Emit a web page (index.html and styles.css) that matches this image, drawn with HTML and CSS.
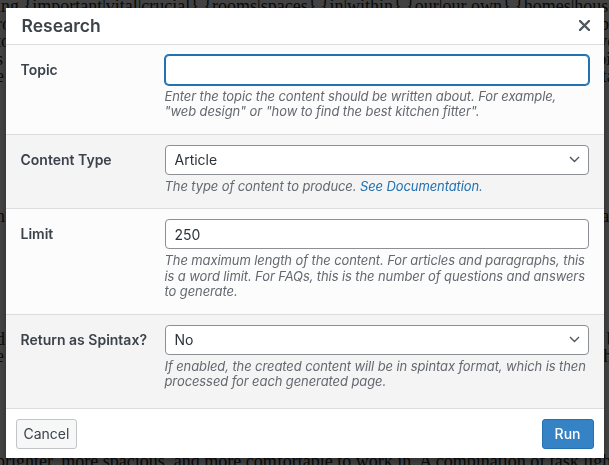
FILE: index.html
```html
<!DOCTYPE html>
<html lang="en">
<head>
  <meta charset="UTF-8" />
  <title>Research</title>
  <link rel="stylesheet" href="styles.css">
</head>
<body>

<div class="page">
  <div class="line">ing {important|vital|crucial} {rooms|spaces} {in|within} {our|our own} {homes|houses}. {It's|It is} {the|a} place</div>
  <div class="line">rooms where we cook, eat and spend time together, so it's worth the effort to think about how</div>
  <div class="line">to the layout, the storage and the surfaces, and also about the fitter who will do the work for</div>
  <div class="line">s who know the trade, the materials and the right questions to ask before a single cabinet here</div>
  <div class="line">e finished room will be the result of good planning and careful work from the very start in the</div>
  <div class="line"></div>
  <div class="line"></div>
  <div class="line"></div>
  <div class="line"></div>
  <div class="line"></div>
  <div class="line"></div>
  <div class="line"></div>
  <div class="line">n a kitchen that is planned around the way you live, every cupboard and drawer has a reason</div>
  <div class="line"></div>
  <div class="line"></div>
  <div class="line"></div>
  <div class="line"></div>
  <div class="line"></div>
  <div class="line"></div>
  <div class="line">d the right lighting can change the whole feel of the room, making it warmer and far brighter</div>
  <div class="line">e and more welcoming for family and friends who come to visit in the evening, or who gather</div>
  <div class="line"></div>
  <div class="line"></div>
  <div class="line"></div>
  <div class="line"></div>
  <div class="line"></div>
  <div class="line">brighter, more spacious, and more comfortable to work in. A combination of task lighting and</div>
</div>

<div class="overlay">
  <div class="modal">
    <div class="modal-header">
      <h1>Research</h1>
      <button class="close" aria-label="Close">
        <svg width="11" height="11" viewBox="0 0 11 11">
          <path d="M1 1 L10 10 M10 1 L1 10" stroke="#50575e" stroke-width="2.4" stroke-linecap="round"/>
        </svg>
      </button>
    </div>

    <div class="modal-body">
      <div class="row">
        <div class="label">Topic</div>
        <div class="field">
          <input class="input focus" type="text" value="">
          <p class="desc">Enter the topic the content should be written about. For example, "web design" or "how to find the best kitchen fitter".</p>
        </div>
      </div>

      <div class="row alt">
        <div class="label">Content Type</div>
        <div class="field">
          <div class="select">
            <span>Article</span>
            <svg width="11" height="7" viewBox="0 0 11 7"><polyline points="1,1 5.5,5.5 10,1" fill="none" stroke="#50575e" stroke-width="1.4"/></svg>
          </div>
          <p class="desc">The type of content to produce. <a href="#">See Documentation.</a></p>
        </div>
      </div>

      <div class="row">
        <div class="label">Limit</div>
        <div class="field">
          <input class="input" type="text" value="250">
          <p class="desc">The maximum length of the content. For articles and paragraphs, this is a word limit. For FAQs, this is the number of questions and answers to generate.</p>
        </div>
      </div>

      <div class="row alt last">
        <div class="label">Return as Spintax?</div>
        <div class="field">
          <div class="select">
            <span>No</span>
            <svg width="11" height="7" viewBox="0 0 11 7"><polyline points="1,1 5.5,5.5 10,1" fill="none" stroke="#50575e" stroke-width="1.4"/></svg>
          </div>
          <p class="desc">If enabled, the created content will be in spintax format, which is then processed for each generated page.</p>
        </div>
      </div>
    </div>

    <div class="modal-footer">
      <button class="btn">Cancel</button>
      <button class="btn primary">Run</button>
    </div>
  </div>
</div>

</body>
</html>
```

FILE: styles.css
```css
* {
  box-sizing: border-box;
  margin: 0;
  padding: 0;
}
body {
  background-color: #fff;
  overflow: hidden;
  height: 465px;
}
.page {
  margin-top: -2px;
  width: 609px;
  overflow: hidden;
  font-family: "Liberation Serif", serif;
  font-size: 18px;
  color: #2a2a2a;
}
.page .line {
  height: 17.5px;
  line-height: 17.5px;
  margin-left: -4px;
  white-space: nowrap;
  overflow: hidden;
}
.overlay {
  position: fixed;
  top: 0;
  left: 0;
  right: 0;
  bottom: 0;
  background-color: rgba(0,0,0,0.74);
  display: flex;
  align-items: center;
  justify-content: center;
}
.modal {
  width: 598px;
  background-color: #fff;
  font-family: Inter, "Liberation Sans", sans-serif;
  color: #3c434a;
  box-shadow: 0 3px 6px rgba(0,0,0,0.3);
}
.modal-header {
  height: 37px;
  border-bottom: 1px solid #dcdcde;
  display: flex;
  align-items: center;
  justify-content: space-between;
  padding: 0 14px 0 16px;
}
.modal-header h1 {
  font-size: 17.5px;
  font-weight: 600;
  color: #3c434a;
  line-height: 36px;
}
.close {
  background: none;
  border: none;
  width: 11px;
  height: 11px;
  display: flex;
  cursor: pointer;
}
.row {
  display: flex;
  padding: 10px 15px 14px;
  background-color: #fcfcfc;
  border-bottom: 1px solid #dcdcde;
}
.row.alt {
  background-color: #f4f4f4;
}
.row.last {
  padding-bottom: 18px;
}
.label {
  width: 144px;
  flex-shrink: 0;
  font-size: 14px;
  font-weight: 600;
  line-height: 30px;
  color: #3c434a;
}
.field {
  flex: 1;
}
.input, .select {
  display: flex;
  align-items: center;
  width: 100%;
  height: 30px;
  border: 1px solid #8c8f94;
  border-radius: 4px;
  background-color: #fff;
  padding: 0 10px 0 9px;
  font-family: inherit;
  font-size: 14px;
  color: #2c3338;
  outline: none;
}
.input.focus {
  border-color: #2271b1;
  box-shadow: 0 0 0 1px #2271b1;
}
.select {
  justify-content: space-between;
  padding-right: 8px;
}
.desc {
  margin-top: 4px;
  font-size: 13px;
  line-height: 15.5px;
  letter-spacing: -0.1px;
  font-style: italic;
  color: #646970;
}
.desc a {
  color: #2271b1;
  text-decoration: none;
}
.modal-footer {
  display: flex;
  justify-content: space-between;
  padding: 10px 10px 9px;
}
.btn {
  height: 30px;
  padding: 0 7px;
  font-family: inherit;
  font-size: 14px;
  border: 1px solid #c3c4c7;
  border-radius: 3px;
  background-color: #f6f7f7;
  color: #3c434a;
  cursor: pointer;
}
.btn.primary {
  padding: 0 12px;
  background-color: #3582c4;
  border-color: #2271b1;
  color: #fff;
  font-weight: 500;
}
```
